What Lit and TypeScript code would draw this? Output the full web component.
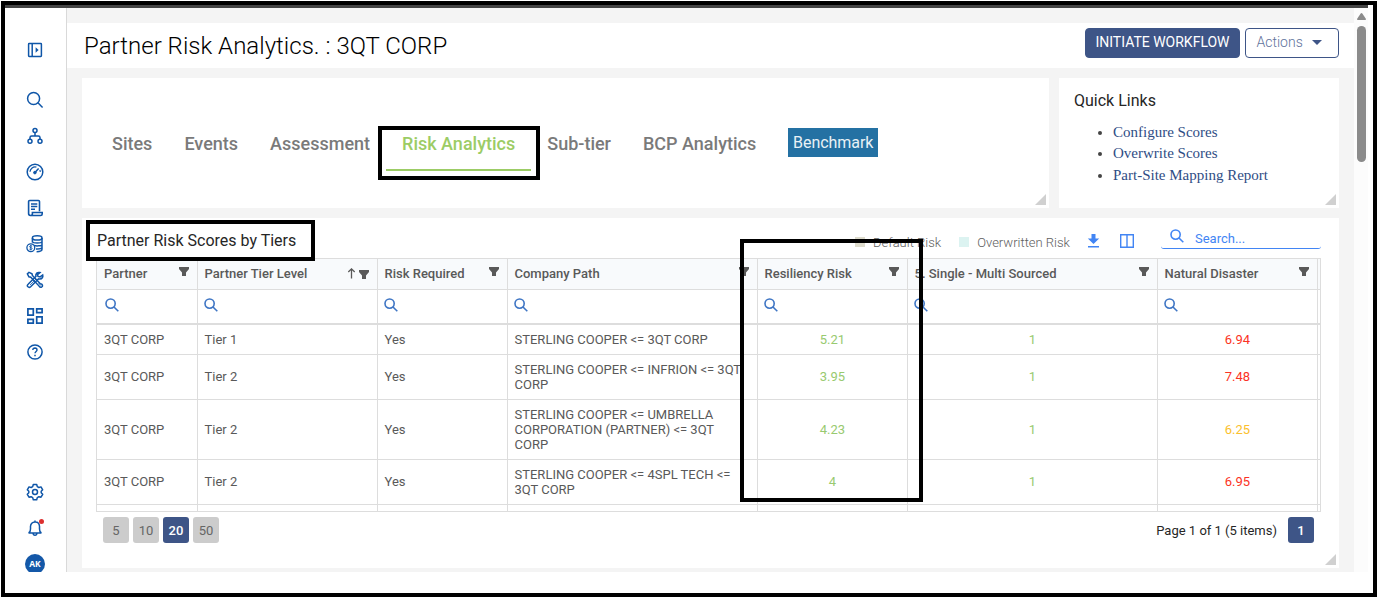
import { LitElement, html, css, svg } from "lit";
import { customElement } from "lit/decorators.js";
import { classMap } from "lit/directives/class-map.js";

const icon = (body: unknown, size = 20) => html`<svg width=${size} height=${size} viewBox="0 0 20 20" fill="none" stroke="currentColor" stroke-width="1.5">${body}</svg>`;

const railTop = [
  svg`<circle cx="8.6" cy="8.5" r="6"/><path d="M12.9 12.8l4.700 4.700"/>`,
  svg`<circle cx="10" cy="4.4" r="2"/><circle cx="5" cy="15.2" r="2"/><circle cx="15" cy="15.2" r="2"/><path d="M10 6.4v3.4M5 13.2v-1.6q0-1.7 1.7-1.7h6.6q1.7 0 1.7 1.7v1.6"/>`,
  svg`<circle cx="10" cy="10" r="7.8"/><circle cx="9.9" cy="10.6" r="1.3" fill="currentColor" stroke-width="1"/><path d="M10.4 10l3.2-3.6" /><path d="M5 9.8a5.1 5.1 0 0 1 6.4-4.7M14.8 8.1q.5 1 .4 1.8" stroke-width="1.3"/>`,
  svg`<path d="M14.5 13.2V3.600q0-1.100-1.100-1.100H4.700q-1.100 0-1.100 1.100v12q0 1.900 1.800 1.900h10.200q1.600 0 1.600-1.600v-1.400H7.400v1.400q0 1.600-1.900 1.600" stroke-width="1.600"/><path d="M6 6h6.300M6 8.600h6.300M6 11.200h4"/>`,
  svg`<ellipse cx="12.200" cy="3.900" rx="4.800" ry="2.100"/><path d="M7.400 3.900v4.600M17 3.900v11.400c0 1.500-2.400 2.400-5.400 2.400M7.400 7.700c.8 1.700 8.800 1.700 9.600 0M9 11.400c2 .8 7.400.6 8-.7M10.900 14.900c3 .2 5.800-.4 6.100-1.300"/><circle cx="5.800" cy="13.800" r="3.900" stroke-width="1.300"/><path d="M7.200 12.100q-2.500-.9-2.700.5c0 1.300 2.700.8 2.700 2q-.3 1.400-2.800.5M5.800 11v5.400" stroke-width=".9"/>`,
  svg`<path d="M2.400 3.900L4 2.300l3 1.500.4 1.700 7.900 8.200q1.800 0 2.200 1.500t-1.200 2.100q-1.500.2-2.200-1.200L5.800 7.200 3.900 6.800z" stroke-width="1.500"/><path d="M14.900 2.600q-3-.7-3.900 1.600-.4 1.100 0 2.200l-7.900 7.800q-1.500 1.400-.2 2.600t2.700-.1l7.900-7.800q2.700.7 4-1.400.6-1.200.2-2.600l-2.600 2-2.100-.5-.5-1.800z" stroke-width="1.500"/><path d="M5 15l6-6M13.500 13l2.500 2.700" stroke-width=".8"/>`,
  svg`<path d="M2.900 2.900h5.400v6.200H2.900zM11.700 2.900h5.400v3.700h-5.400zM2.900 13.400h5.400v3.700H2.900zM11.700 10.900h5.400v6.200h-5.400z" stroke-width="1.700"/>`,
  svg`<circle cx="10" cy="10" r="7.100"/><path d="M7.800 8q.1-2 2.200-2 2 .1 2 1.900c0 1.500-2 1.600-2 3.400" stroke-width="1.400"/><path d="M10 12.800v1.500"/>`,
];

const magnifier = html`<svg width="14" height="14" viewBox="0 0 14 14" fill="none" stroke="currentColor" stroke-width="1.6"><circle cx="5.6" cy="5.6" r="4.6"/><path d="M9 9l4.300 4.300"/></svg>`;
const funnel = html`<svg class="funnel" width="10" height="10" viewBox="0 0 10 10" fill="currentColor"><path d="M0 0h10v2L7 5.400V9H3V5.400L0 2z"/></svg>`;

const columns = [
  { title: "Partner" },
  { title: "Partner Tier Level", sorted: true },
  { title: "Risk Required" },
  { title: "Company Path" },
  { title: "Resiliency Risk" },
  { title: "5. Single - Multi Sourced" },
  { title: "Natural Disaster" },
];

const rows = [
  ["3QT CORP", "Tier 1", "Yes", "STERLING COOPER <= 3QT CORP", "5.21", "1", "6.94"],
  ["3QT CORP", "Tier 2", "Yes", "STERLING COOPER <= INFRION <= 3QT CORP", "3.95", "1", "7.48"],
  ["3QT CORP", "Tier 2", "Yes", "STERLING COOPER <= UMBRELLA CORPORATION (PARTNER) <= 3QT CORP", "4.23", "1", "6.25"],
  ["3QT CORP", "Tier 2", "Yes", "STERLING COOPER <= 4SPL TECH <= 3QT CORP", "4", "1", "6.95"],
];

@customElement("side-rail")
class SideRail extends LitElement {
  static styles = css`
    :host { display: flex; flex-direction: column; align-items: flex-start; padding-top: 24px; border-right: 1px solid #d9d9d9; background: #fff; color: #0f56a8; flex: none; }
    .item { height: 36px; width: 36px; margin-left: 12px; flex: none; display: flex; align-items: center; justify-content: center; position: relative; }
    .toggle { margin-bottom: 14px; }
    .gap { height: 104px; flex: none; }
    .dot { position: absolute; left: 22px; top: 9px; width: 5px; height: 5px; border-radius: 50%; background: #dc2f2f; }
    .avatar { width: 20px; height: 20px; border-radius: 50%; background: #1458a8; color: #fff; font: 700 8.5px/20px "Open Sans", sans-serif; text-align: center; }
  `;
  render() {
    return html`
      <div class="item toggle">${icon(svg`<rect x="3.6" y="3.6" width="12.8" height="12.8" rx=".6"/><path d="M7.2 3.6v12.8"/><path d="M10.6 7.200l3 2.800-3 2.800z" fill="currentColor" stroke="none"/>`)}</div>
      ${railTop.map((i) => html`<div class="item">${icon(i)}</div>`)}
      <div class="gap"></div>
      <div class="item">${icon(svg`<path d="M8.300 2.500h3.400l.6 2.100 1.600.9 2.100-.6 1.700 2.900-1.500 1.500v1.500l1.500 1.500-1.700 2.900-2.100-.5-1.600.9-.6 2.100H8.300l-.6-2.100-1.600-.9-2.100.5-1.700-2.900 1.500-1.500V9.300L2.300 7.800 4 4.900l2.100.6 1.600-.9z" stroke-linejoin="round"/><circle cx="10" cy="10" r="2.500"/>`)}</div>
      <div class="item">${icon(svg`<path d="M3.600 14.900q1.900-1 1.900-4V8.300Q5.800 4.300 10 4t4.500 4.300v2.600q0 3 1.900 4zM8 15q.2 2.300 2 2.300t2-2.300M10 4V2.600"/>`)}<span class="dot"></span></div>
      <div class="item"><div class="avatar">AK</div></div>
    `;
  }
}

@customElement("risk-grid")
class RiskGrid extends LitElement {
  static styles = css`
    :host { display: block; font: 13px/15px Roboto, sans-serif; color: #595959; }
    .grid { display: flex; flex-direction: column; height: 252px; border: 1px solid #ddd; overflow: hidden; }
    .row { display: grid; grid-template-columns: 101px 180px 130px 250px 150px 250px 160px 2px; flex: none; border-bottom: 1px solid #ddd; }
    .cell { border-right: 1px solid #ddd; padding: 7px 7px 7px 6.5px; box-sizing: border-box; display: flex; align-items: center; }
    .cell:first-child { padding-left: 7px; }
    .cell span { display: block; }
    .val { margin-top: -1px; }
    .head { height: 30px; background: #f8fafc; font-weight: 500; }
    .head .cell { justify-content: space-between; padding-right: 8px; padding-top: 6px; padding-bottom: 8px; }
    .cell .tools { display: flex; align-items: center; }
    .funnel { display: block; margin-top: -3px; }
    .sorted .funnel { margin-top: 3px; margin-left: 3px; }
    .filter { height: 33px; border-bottom-width: 2px; color: #3e75c4; }
    .filter .cell { padding: 0 6px 3px; }
    .filter .cell:first-child { padding-left: 8px; }
    .cell.num { justify-content: center; padding-right: 7px; padding-left: 7px; }
    .num { color: #98ca70; }
    .high { color: #fb3324; }
    .mid { color: #fbc02d; }
    .tail { height: 20px; border: 0; }
  `;
  render() {
    return html`<div class="grid">
      <div class="row head">
        ${columns.map((c) => html`<div class=${classMap({ cell: true, sorted: !!c.sorted })}><span>${c.title}</span><span class="tools">
          ${c.sorted ? html`<svg width="9" height="11" viewBox="0 0 9 11" fill="none" stroke="currentColor" stroke-width="1.3"><path d="M4.5 10.5V1.200M1.300 4L4.500.9 7.700 4"/></svg>` : ""}${funnel}</span></div>`)}
      </div>
      <div class="row filter">${columns.map(() => html`<div class="cell">${magnifier}</div>`)}</div>
      ${rows.map((r) => html`<div class="row">${r.map((v, i) => html`<div class=${classMap({ cell: true, num: i > 3, high: i === 6 && +v > 6.5, mid: i === 6 && +v <= 6.5 })}><span class=${i === 3 ? "" : "val"}>${v}</span></div>`)}</div>`)}
      <div class="row tail">${columns.map(() => html`<div class="cell"></div>`)}</div>
    </div>`;
  }
}

@customElement("app-root")
class AppRoot extends LitElement {
  static styles = css`
    :host { display: block; position: relative; width: 1378px; height: 598px; overflow: hidden; background: #fff; font-family: Roboto, sans-serif; }
    .frame { position: absolute; left: 1px; top: 1px; width: 1376px; height: 596px; box-sizing: border-box; border: 4px solid #000; z-index: 5; }
    .window { padding: 5px 10px 0 5px; }
    .chrome { height: 3px; background: #444; }
    .shell { display: flex; height: 564px; overflow: hidden; }
    side-rail { box-sizing: content-box; width: 61px; }
    .main { flex: 1; min-width: 0; background: #f4f4f4; padding-top: 15px; }
    .header { height: 45px; background: #fff; display: flex; align-items: center; padding: 0 15px 0 17px; gap: 5px; }
    .title { flex: 1; font-weight: 300; font-size: 24px; letter-spacing: .02px; color: #000; white-space: nowrap; }
    .btn { box-sizing: border-box; height: 30px; border: 1px solid #3e5587; border-radius: 4px; font-size: 14px; line-height: 27px; margin-top: -6px; white-space: nowrap; }
    .primary { width: 155px; background: #3e5587; color: #fff; text-align: center; }
    .ghost { width: 94px; color: #5f739c; font-weight: 300; padding: 0 0 1px 10.5px; display: flex; align-items: center; gap: 9.5px; }
    .top { display: flex; gap: 10px; padding: 10px 15px 10px; }
    .card { background: #fff; position: relative; box-sizing: border-box; }
    .grip { position: absolute; right: 3px; bottom: 3px; width: 11px; height: 11px; background: #d0d0d0; clip-path: polygon(100% 0, 100% 100%, 0 100%); }
    .tabs { width: 967px; height: 130px; display: flex; align-items: flex-start; padding: 50px 0 0 14px; font-weight: 500; font-size: 18px; color: #7a7a7a; white-space: nowrap; }
    .tab { padding: 0 16px; line-height: 32px; }
    .on { color: #9ccc65; }
    .line { height: 2px; background: #9ccc65; margin: 9px -16px 0; }
    .bench { font-size: 16px; font-weight: 400; letter-spacing: -.06px; background: #2471a3; color: #e9f1f6; line-height: 29px; height: 29px; width: 90px; text-align: center; margin-left: 16px; }
    .quick { flex: 1; height: 130px; padding: 12px 15px; }
    .h { font-size: 16px; line-height: 21px; color: #262626; }
    .links { margin: 11px 0 0; padding-left: 39px; font: 15px/21.5px "Liberation Serif", serif; color: #444; }
    .links li:first-child { line-height: 21px; }
    .links a { color: #2f4d85; }
    .scores { margin: 0 15px; height: 350px; padding: 0 18px 0 14px; }
    .bar { height: 40px; display: flex; align-items: center; font-size: 13px; color: #757575; }
    .bar .h { flex: 1; padding: 4px 0 0 1px; }
    .legend { font-weight: 300; font-size: 13px; padding-top: 8px; display: flex; align-items: center; color: #606060; }
    .sw { width: 10px; height: 10px; margin-right: 8px; background: #dedccd; }
    .sw.over { background: #dcf3f1; margin-left: 18px; }
    .act { display: flex; color: #4285f4; padding-top: 5px; margin-left: 17px; }
    .act + .act { margin-left: 20px; }
    .search { box-sizing: border-box; width: 160px; height: 24px; margin: 0 0 3px 27px; border-bottom: 1px solid #4285f4; border-radius: 3px; display: flex; color: #4285f4; padding: 4px 0 0 9px; gap: 11px; line-height: 19px; font-size: 13px; font-weight: 400; }
    .pager { display: flex; align-items: center; gap: 4px; padding: 5px 7px; font-size: 13px; color: #262626; }
    .pg { width: 26px; height: 26px; border-radius: 3px; background: #ccc; color: #666; text-align: center; line-height: 27px; }
    .cur { background: #3e5587; color: #fff; font-weight: 500; }
    .info { margin-left: auto; margin-right: 7px; }
    .track { width: 14px; background: #fcfcfc; display: flex; flex-direction: column; align-items: center; padding-top: 5px; box-sizing: border-box; }
    .thumb { width: 9px; height: 136px; border-radius: 5px; background: #8b8b8b; margin-top: 6px; }
    .mark { position: absolute; box-sizing: border-box; border: 4px solid #000; z-index: 4; }
    .m1 { left: 378px; top: 126px; width: 162px; height: 54px; }
    .m2 { left: 86px; top: 220px; width: 229px; height: 41px; }
    .m3 { left: 740px; top: 239px; width: 183px; height: 263px; }
  `;
  render() {
    return html`
      <div class="window">
        <div class="chrome"></div>
        <div class="shell">
          <side-rail></side-rail>
          <div class="main">
            <div class="header">
              <div class="title">Partner Risk Analytics. : 3QT CORP</div>
              <div class="btn primary">INITIATE WORKFLOW</div>
              <div class="btn ghost">Actions <svg width="10" height="5" viewBox="0 0 10 5"><path d="M0 0h10L5 5z" fill="#3e5587"/></svg></div>
            </div>
            <div class="top">
              <div class="card tabs">
                <div class="tab">Sites</div><div class="tab">Events</div><div class="tab">Assessment</div>
                <div class="tab on">Risk Analytics<div class="line"></div></div>
                <div class="tab">Sub-tier</div><div class="tab">BCP Analytics</div>
                <div class="bench">Benchmark</div><span class="grip"></span>
              </div>
              <div class="card quick">
                <div class="h">Quick Links</div>
                <ul class="links"><li><a>Configure Scores</a></li><li><a>Overwrite Scores</a></li><li><a>Part-Site Mapping Report</a></li></ul>
                <span class="grip"></span>
              </div>
            </div>
            <div class="card scores">
              <div class="bar">
                <div class="h">Partner Risk Scores by Tiers</div>
                <div class="legend"><span class="sw"></span>Default Risk<span class="sw over"></span>Overwritten Risk</div>
                <div class="act"><svg width="13" height="14" viewBox="0 0 13 14" fill="currentColor"><path d="M4.500 0h4v4.500h3.700L6.500 10.100.8 4.500h3.700zM1 12h11v1.600H1z"/></svg></div>
                <div class="act"><svg width="14" height="14" viewBox="0 0 14 14" fill="none" stroke="currentColor" stroke-width="1.400"><path d="M.7.7h12.600v12.600H.7zM7 .7v12.600"/></svg></div>
                <div class="search">${magnifier}<span>Search...</span></div>
              </div>
              <risk-grid></risk-grid>
              <div class="pager">
                <span class="pg">5</span><span class="pg">10</span><span class="pg cur">20</span><span class="pg">50</span>
                <span class="info">Page 1 of 1 (5 items)</span><span class="pg cur">1</span>
              </div>
              <span class="grip"></span>
            </div>
          </div>
          <div class="track"><svg width="9" height="7" viewBox="0 0 9 7"><path d="M4.500 0Q5 0 5.500.7L9 6q0 1-.8 1H.8Q0 7 0 6L3.500.7Q4 0 4.500 0z" fill="#8b8b8b"/></svg><div class="thumb"></div></div>
        </div>
      </div>
      <div class="frame"></div>
      <div class="mark m1"></div><div class="mark m2"></div><div class="mark m3"></div>
    `;
  }
}
